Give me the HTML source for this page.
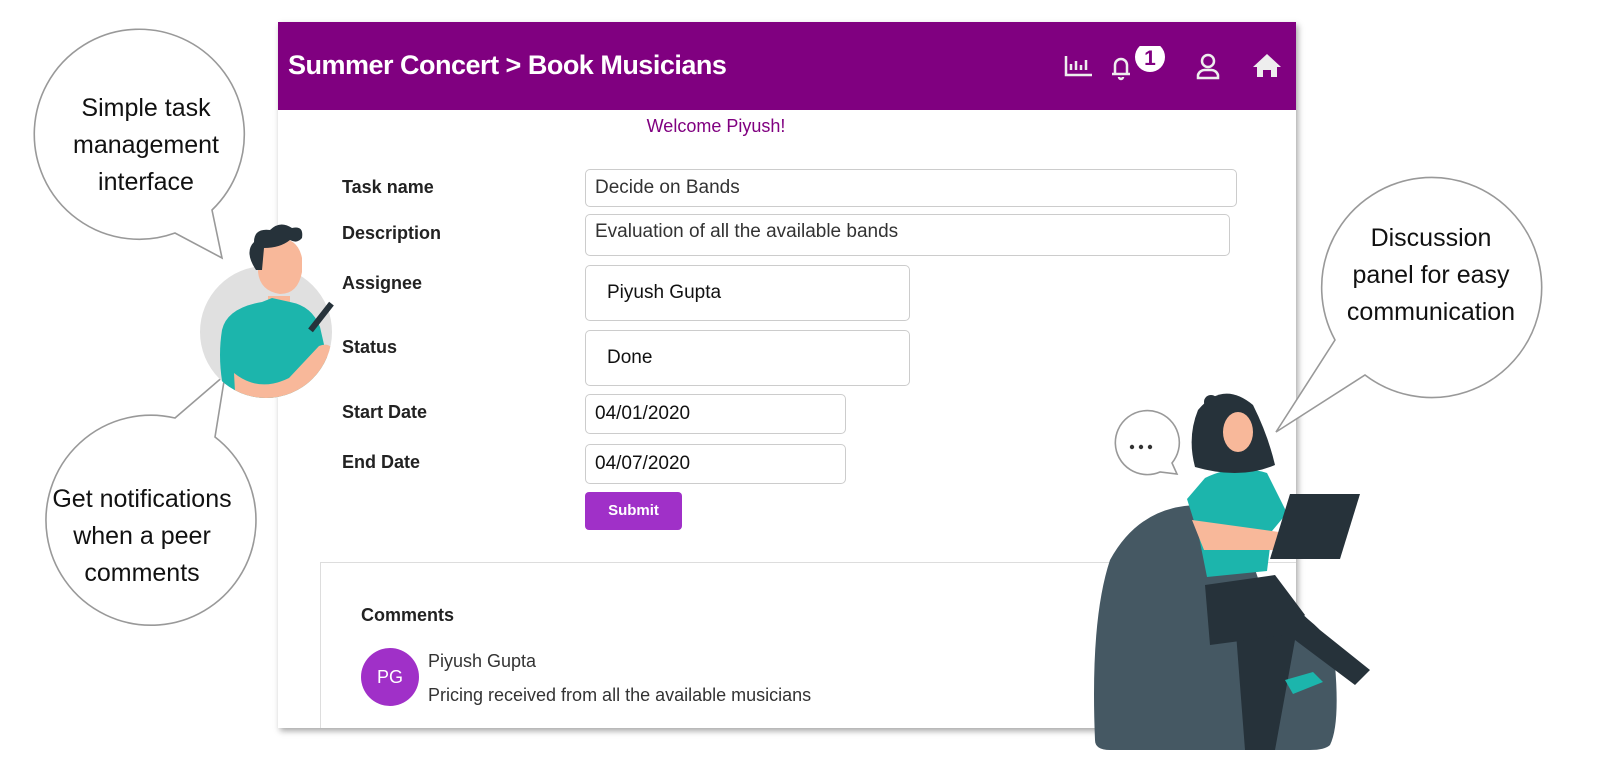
<!DOCTYPE html>
<html><head><meta charset="utf-8"><style>
body{margin:0;width:1611px;height:781px;background:#fff;position:relative;overflow:hidden;font-family:"Liberation Sans",Arial,sans-serif}
.card{position:absolute;left:278px;top:22px;width:1018px;height:706px;background:#fff;box-shadow:2px 3px 6px rgba(0,0,0,.35);overflow:hidden}
.hdr{height:88px;background:#800080;color:#fff;position:relative}
.hdr .t{position:absolute;left:10px;top:28px;font-size:27px;font-weight:bold;letter-spacing:-0.5px}
.wel{position:absolute;left:0;width:1018px;text-align:center;top:94px;color:#800080;font-size:18px}
.lbl{position:absolute;left:64px;font-weight:bold;font-size:18px;color:#222}
.inp{position:absolute;border:1px solid #ccc;border-radius:5px;font-size:19px;color:#333;box-sizing:border-box;padding-left:9px;background:#fff}
.btn{position:absolute;left:307px;top:470px;width:97px;height:38px;background:#a030c8;border-radius:4px;color:#fff;font-weight:bold;font-size:15px;text-align:center;line-height:38px}
.cm{position:absolute;left:42px;top:540px;width:1000px;height:180px;border:1px solid #ddd}
.txt{position:absolute;font-family:"Liberation Sans",sans-serif;font-size:25px;text-align:center;color:#111;line-height:37px}
</style></head><body>
<div class="card">
 <div class="hdr"><div class="t">Summer Concert &gt; Book Musicians</div>
  <svg style="position:absolute;left:780px;top:24px" width="230" height="40">
   <g stroke="#eee" fill="none" stroke-width="2.5">
    <path d="M8 10v19h26M13 24v-6M18 24v-9M23 24v-5M28 24v-10"/>
    <path d="M54 28h18M57 28v-9a6 6 0 0 1 12 0v9M61 31a2 2 0 0 0 4 0"/>
    <circle cx="150" cy="15" r="6"/><path d="M140 32v-3a7 7 0 0 1 7-5h6a7 7 0 0 1 7 5v3z"/>
   </g>
   <circle cx="92" cy="11" r="15" fill="#fff"/><text x="92" y="19" text-anchor="middle" font-size="21" font-weight="bold" fill="#800080" font-family="Liberation Sans">1</text>
   <path d="M195 21l14-13 14 13h-4v10h-6v-7h-8v7h-6v-10z" fill="#eee"/>
  </svg>
 </div>
 <div class="wel" style="width:876px">Welcome Piyush!</div>
 <div class="lbl" style="top:155px">Task name</div>
 <div class="lbl" style="top:201px">Description</div>
 <div class="lbl" style="top:251px">Assignee</div>
 <div class="lbl" style="top:315px">Status</div>
 <div class="lbl" style="top:380px">Start Date</div>
 <div class="lbl" style="top:430px">End Date</div>
 <div class="inp" style="left:307px;top:147px;width:652px;height:38px;line-height:36px">Decide on Bands</div>
 <div class="inp" style="left:307px;top:192px;width:645px;height:42px;line-height:34px">Evaluation of all the available bands</div>
 <div class="inp" style="left:307px;top:243px;width:325px;height:56px;line-height:54px;padding-left:21px;color:#111">Piyush Gupta</div>
 <div class="inp" style="left:307px;top:308px;width:325px;height:56px;line-height:54px;padding-left:21px;color:#111">Done</div>
 <div class="inp" style="left:307px;top:372px;width:261px;height:40px;line-height:38px;color:#111">04/01/2020</div>
 <div class="inp" style="left:307px;top:422px;width:261px;height:40px;line-height:38px;color:#111">04/07/2020</div>
 <div class="btn">Submit</div>
 <div class="cm">
  <div style="position:absolute;left:40px;top:42px;font-weight:bold;font-size:18px;color:#222">Comments</div>
  <div style="position:absolute;left:40px;top:85px;width:58px;height:58px;border-radius:50%;background:#a030c8;color:#fff;font-size:18px;text-align:center;line-height:58px">PG</div>
  <div style="position:absolute;left:107px;top:88px;font-size:18px;color:#333">Piyush Gupta</div>
  <div style="position:absolute;left:107px;top:122px;font-size:18px;color:#333">Pricing received from all the available musicians</div>
 </div>
</div>
<svg style="position:absolute;left:0;top:0" width="1611" height="781">
 <defs><clipPath id="cc"><circle cx="266" cy="332" r="66"/><rect x="200" y="200" width="160" height="110"/></clipPath></defs>
 <g fill="#fff" stroke="#999" stroke-width="1.6">
  <path d="M175 233 A105 105 0 1 1 212 210 L222 258 Z"/>
  <path d="M175 418 L225 375 L215 437 A105 105 0 1 1 175 418 Z"/>
  <path d="M1335 340 A110 110 0 1 1 1365 375 L1276 432 Z"/>
  <path d="M1160 472 A32 32 0 1 1 1172 463 L1177 474 Z"/>
 </g>
 <g fill="#333"><circle cx="1132" cy="447" r="2.2"/><circle cx="1141" cy="447" r="2.2"/><circle cx="1150" cy="447" r="2.2"/></g>
 <!-- man -->
 <circle cx="266" cy="332" r="66" fill="#e0e0e0"/>
 <g clip-path="url(#cc)">
  <path d="M268 296 h22 v20 h-22z" fill="#f8b89a"/>
  <path d="M222 330 q5-22 40-28 l10-4 l18 4 q22 4 30 25 l8 35 q-5 30 -20 45 h-80 q-12-40 -6-77z" fill="#1cb5ac"/>
  <path d="M234 373 q25 20 55 5 l30-32 q12 -5 16 8 q-10 35 -40 50 q-40 5 -60-12z" fill="#f8b89a"/>
 </g>
 <rect x="318" y="300" width="6" height="34" transform="rotate(38 321 317)" fill="#26323a"/>
 <path d="M258 258 q0-18 20-20 q20 0 24 20 v14 q-4 22 -22 22 q-20 -3 -22-22z" fill="#f8b89a"/>
 <path d="M256 270 q-12-18 -2-28 q0-14 16-12 q10-10 22-2 q12-3 10 10 q-5 6 -12 2 q-10 8 -26 8 l-2 22z" fill="#26323a"/>
 <!-- woman -->
 <path d="M1095 740 q-5-120 15-180 q30-55 90-55 q40 10 60 80 q60 30 75 80 q5 60 -5 80 q-5 5 -20 5 h-200 q-15 0 -15-10z" fill="#455863"/>
 <path d="M1210 600 q60-20 110 30 l50 40 l-15 15 l-60-45 l-20 110 h-30 l-10-130z" fill="#26323a"/>
 <path d="M1205 585 l70-10 l30 40 l-20 20 l-75 10z" fill="#26323a"/>
 <path d="M1205 478 q30-15 62-5 l20 40 l-15 18 l-5 40 l-60 6 l-8-40 l-12-38z" fill="#1cb5ac"/>
 <path d="M1192 520 l12 30 h80 l-5-18 z" fill="#f8b89a"/>
 <path d="M1290 494 h70 l-20 65 h-70z" fill="#26323a"/>
 <path d="M1198 410 q25-30 55-5 q15 30 22 60 q-35 15 -80 2 q-8-30 3-57z" fill="#26323a"/>
 <ellipse cx="1238" cy="432" rx="15" ry="20" fill="#f8b89a"/>
 <circle cx="1211" cy="402" r="7" fill="#26323a"/>
 <path d="M1285 680 l28 -8 l10 10 l-30 12z" fill="#1cb5ac"/>
</svg>
<div class="txt" style="left:41px;top:90px;width:210px">Simple task<br>management<br>interface</div>
<div class="txt" style="left:37px;top:481px;width:210px">Get notifications<br>when a peer<br>comments</div>
<div class="txt" style="left:1326px;top:220px;width:210px">Discussion<br>panel for easy<br>communication</div>
</body></html>
